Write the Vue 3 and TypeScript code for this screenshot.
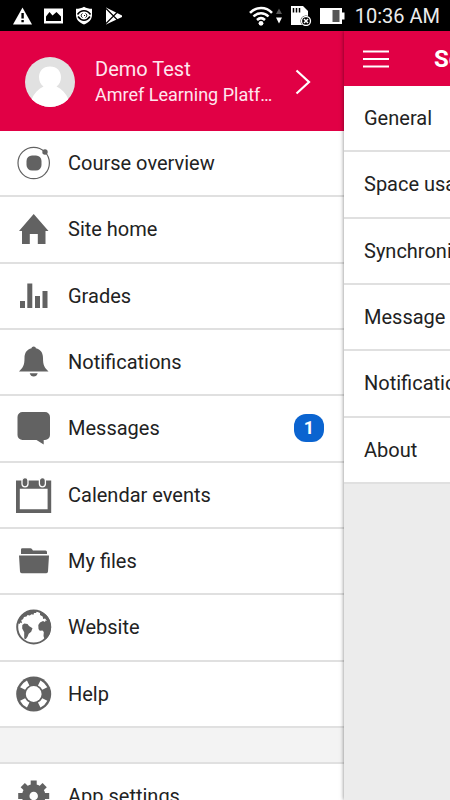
<script setup lang="ts">
interface MenuItem {
  id: string
  label: string
  badge?: number
}

const siteItems: MenuItem[] = [
  { id: 'overview', label: 'Course overview' },
  { id: 'home', label: 'Site home' },
  { id: 'grades', label: 'Grades' },
  { id: 'bell', label: 'Notifications' },
  { id: 'messages', label: 'Messages', badge: 1 },
  { id: 'calendar', label: 'Calendar events' },
  { id: 'files', label: 'My files' },
  { id: 'website', label: 'Website' },
  { id: 'help', label: 'Help' },
]

const settings: string[] = [
  'General',
  'Space usage',
  'Synchronisation',
  'Message preferences',
  'Notification preferences',
  'About',
]
</script>

<template>
  <div class="screen">
    <div class="status">
      <svg width="19" height="18" viewBox="0 0 19 18">
        <path d="M9.500 0.500 19 17.500H0Z" fill="#fff" />
        <path d="M8.400 6h2.400v5.500H8.400zM8.400 13h2.400v2.200H8.400z" fill="#000" />
      </svg>
      <svg width="19" height="18" viewBox="0 0 19 18">
        <path d="M0 1.500h19v15H0Z" fill="#fff" />
        <path d="M2 14V9.500L5.500 5l3 3.500L12.500 5 17 9.500V14Z" fill="#000" />
      </svg>
      <svg width="18" height="19" viewBox="0 0 18 19">
        <path d="M9 .8C6.500 2.200 4 2.800 1 2.800V9c0 4.500 3 7.500 8 9.500 5-2 8-5 8-9.500V2.800c-3 0-5.500-.6-8-2Z" fill="#fff" />
        <path d="M2.500 8.500C6 3.500 12 3.500 15.500 8.500M3 10.500c3.500 5 8.500 5 12 0" fill="none" stroke="#000" stroke-width="1.500" />
        <path d="M7.500 7.500a2.200 2.200 0 0 0 0 4M10.500 7.500a2.200 2.200 0 0 1 0 4M9 9.500h1" fill="none" stroke="#000" />
      </svg>
      <svg width="18" height="18" viewBox="0 0 18 18">
        <path d="M1 0.500 17 8.500v1.500L1 17.500Z" fill="#fff" />
        <path d="M1 1.500 13.500 14M1 16.500 13.500 4" stroke="#000" stroke-width="1.200" />
      </svg>
      <span class="spacer"></span>
      <svg width="24" height="20" viewBox="0 0 24 20" fill="none" stroke="#fff" stroke-width="2.500">
        <path d="M1 6.800C7 .4 17 .4 23 6.800M4.500 10.500c4.200-4.300 10.800-4.300 15 0M8 14c2.500-2.400 5.500-2.400 8 0" />
        <circle cx="12" cy="17.300" r="2.400" fill="#fff" stroke="none" />
      </svg>
      <svg class="traffic" width="8" height="18" viewBox="0 0 8 18">
        <path d="M1 7 4 1.500 7 7Z" fill="#555" />
        <path d="M1 10.500h6L4 16.500Z" fill="#fff" />
      </svg>
      <svg class="card" width="21" height="20" viewBox="0 0 21 20">
        <path d="M0 0h12l5 5v14H0Z" fill="#fff" />
        <path d="M2.500 2v4.500M5.500 2v4.500M8.500 2v4.500" stroke="#000" stroke-width="1.500" />
        <circle cx="15" cy="15" r="5.500" fill="#000" />
        <circle cx="15" cy="15" r="4.500" fill="#000" stroke="#fff" stroke-width="1.300" />
        <path d="m13 13 4 4m0-4-4 4" stroke="#fff" stroke-width="1.500" />
      </svg>
      <svg class="battery" width="25" height="18" viewBox="0 0 25 18">
        <path d="M0 1h22v4.500h2.500v7H22V17H0Z" fill="#fff" />
        <path d="M12.500 3h7v12h-7z" fill="#555" />
      </svg>
      <span class="clock">10:36 AM</span>
    </div>

    <div class="panes">
      <nav class="drawer" aria-label="Main menu">
        <button class="account" type="button">
          <svg class="avatar" width="50" height="50" viewBox="0 0 50 50">
            <defs>
              <clipPath id="avatar-clip"><circle cx="25" cy="25" r="25" /></clipPath>
            </defs>
            <g clip-path="url(#avatar-clip)">
              <path d="M0 0h50v50H0z" fill="#e1e1e1" />
              <path d="M25 9.500c7 0 11 4.800 11 10.500 0 4-1.500 7.500-4.500 9.500 5.500 2.500 9.500 7 12 13V50H6.500v-7.500c2.500-6 6.500-10.500 12-13-3-2-4.500-5.500-4.500-9.500 0-5.700 4-10.500 11-10.500Z" fill="#fff" />
            </g>
          </svg>
          <span class="who">
            <span class="name">Demo Test</span>
            <span class="site">Amref Learning Platform</span>
          </span>
          <svg class="chevron" width="16" height="26" viewBox="0 0 16 26">
            <path d="M1.500 1.500 14 13 1.500 24.500" fill="none" stroke="#fff" stroke-width="2.200" />
          </svg>
        </button>

        <ul class="rows site-rows">
          <li v-for="item in siteItems" :key="item.id">
            <a class="row" href="#">
              <svg class="icon" viewBox="0 0 36 36">
                <g v-if="item.id === 'overview'">
                  <circle cx="17.700" cy="18" r="15.700" fill="none" stroke="#626262" stroke-width="1.200" />
                  <rect x="10.500" y="10.500" width="15" height="15" rx="5.500" />
                  <circle cx="29" cy="7" r="2.700" />
                </g>
                <path v-else-if="item.id === 'home'" d="M17.700 3 32.500 20H29.500V33H21.800V23H13.800V33H6V20H3Z" />
                <path v-else-if="item.id === 'grades'" d="M4 23h5v7H4zM11.300 5.500h5V30h-5zM19 18h5v12h-5zM26.500 13h5v17h-5z" />
                <path v-else-if="item.id === 'bell'" d="M17.700 2.500c1.200 0 2 .8 2.200 1.800 4.600 1 7.100 4.500 7.100 9.700 0 7.500 1.500 9.500 5.500 13.500H3c4-4 5.500-6 5.500-13.500 0-5.200 2.500-8.700 7-9.700.2-1 1-1.800 2.200-1.800ZM13.700 29.200h8c-.5 2-2 3.300-4 3.300s-3.500-1.300-4-3.300Z" />
                <path v-else-if="item.id === 'messages'" d="M6.500 2h22.500a5 5 0 0 1 5 5v18a5 5 0 0 1-5 5h-1.300v4.500L20.500 30h-14a5 5 0 0 1-5-5V7a5 5 0 0 1 5-5Z" />
                <g v-else-if="item.id === 'calendar'">
                  <path fill-rule="evenodd" d="M0 3.500h35.200V36H0ZM3.800 11.700V32.200h27.800V11.700Z" />
                  <g stroke="#fff" stroke-width="1.300">
                    <rect x="6" y=".6" width="6" height="9.200" rx="3" />
                    <rect x="23.400" y=".6" width="6" height="9.200" rx="3" />
                  </g>
                </g>
                <path v-else-if="item.id === 'files'" d="M5 11V6.500q0-1.300 1.300-1.300h8q1.200 0 1.800 1l.8 1.300H29.500q1.500 0 1.500 1.500v2ZM3 12.500h30l-1 16q-.1 1.700-1.700 1.700H5.700q-1.600 0-1.700-1.700Z" />
                <g v-else-if="item.id === 'website'">
                  <circle cx="17.700" cy="18" r="16.500" fill="#fff" stroke="#626262" stroke-width="2" />
                  <path d="M1.500 14C3.500 7 8 3.500 14 1.500l3-.3 4 1-1 1.800-2 0-.5 1.800-2-.6-1.700 1.200-2.300-.4-1 1.500-2.500.5-1 2.300-1.700.7.7 3.200-1.500-.7-1 1.500ZM23 2c5 1.500 9.500 5 11 10l-2.500.5-2.500-3-1.800.5-.5-2.500-2.700-1.500 0-2Z" />
                  <path d="m6.300 16 2-1.500 3.200.5 1.500 2 3.500 2.300-1.300 3.500-2.500 2-1.200 3-1.800 2.500-1.500-.8 0-6.300-2-3.800ZM24 13.500l3-1.500 2 1 .5-1.500 4.500.5 1.200 6-1.200 6.500-3.500 5-2 .5-1-3 .3-4-1.300-1.500-2.700.3-1.300-1.800-.2-4Z" />
                </g>
                <g v-else>
                  <circle cx="17.700" cy="18" r="17.500" />
                  <circle cx="17.700" cy="18" r="12.400" fill="none" stroke="#fff" stroke-width="5.600" pathLength="360" stroke-dasharray="37 53" stroke-dashoffset="-26.500" />
                  <circle cx="17.700" cy="18" r="7.900" fill="#fff" />
                </g>
              </svg>
              <span class="label">{{ item.label }}</span>
              <span v-if="item.badge" class="badge">{{ item.badge }}</span>
            </a>
          </li>
        </ul>

        <div class="group-gap"></div>

        <ul class="rows">
          <li>
            <a class="row" href="#">
              <svg class="icon" viewBox="0 0 36 36">
                <g transform="translate(17.700 18)">
                  <rect v-for="n in 8" :key="n" x="-3" y="-15.500" width="6" height="8" :transform="`rotate(${n * 45})`" />
                  <circle r="8" fill="none" stroke="#626262" stroke-width="7.500" />
                </g>
              </svg>
              <span class="label">App settings</span>
            </a>
          </li>
        </ul>
      </nav>

      <main class="content">
        <header class="toolbar">
          <button class="menu-button" type="button" aria-label="Toggle menu">
            <svg width="26" height="20" viewBox="0 0 26 20">
              <path d="M0 2.500h26M0 10h26M0 17.500h26" stroke="#fff" stroke-width="2.200" />
            </svg>
          </button>
          <h1>Settings</h1>
        </header>
        <ul class="rows setting-rows">
          <li v-for="name in settings" :key="name">
            <a class="row" href="#">{{ name }}</a>
          </li>
        </ul>
      </main>
    </div>
  </div>
</template>

<style>
body {
  margin: 0;
  background: #ececec;
}
</style>

<style scoped>
.screen {
  display: flex;
  flex-direction: column;
  height: 100vh;
  overflow: hidden;
  font-family: Roboto, "Liberation Sans", sans-serif;
  font-size: 20px;
  color: #222;
}

.screen * {
  box-sizing: border-box;
}

svg {
  display: block;
  flex: none;
}

button {
  border: 0;
  padding: 0;
  background: none;
  font: inherit;
  color: inherit;
  text-align: left;
}

.status {
  flex: none;
  display: flex;
  align-items: center;
  gap: 12px;
  height: 31px;
  padding: 0 10px 0 13px;
  background: #000;
  color: #ececec;
}

.spacer {
  flex: 1;
}

.traffic {
  margin-left: -10px;
}

.card {
  margin-left: -4px;
}

.battery {
  margin-left: -4px;
}

.clock {
  margin-left: -2px;
  white-space: nowrap;
}

.panes {
  flex: 1;
  min-height: 0;
  display: flex;
  overflow: hidden;
}

.drawer {
  flex: 0 0 344px;
  min-width: 0;
  background: #fff;
}

.account {
  display: flex;
  align-items: center;
  width: 100%;
  height: 100px;
  padding: 2px 33px 0 25px;
  background: #e10045;
  color: #ffe6ee;
}

.who {
  flex: 1;
  min-width: 0;
  display: flex;
  flex-direction: column;
  margin: 0 20px;
  line-height: 26px;
}

.site {
  overflow: hidden;
  white-space: nowrap;
  text-overflow: ellipsis;
  font-size: 18px;
}

.rows {
  display: grid;
  grid-template-columns: minmax(0, 1fr);
  grid-auto-rows: 1fr;
  margin: 0;
  padding: 0;
  list-style: none;
}

.site-rows {
  min-height: 597px;
}

.setting-rows {
  min-height: 398px;
  background: #fff;
}

.row {
  display: flex;
  align-items: center;
  gap: 16px;
  height: 100%;
  min-height: 66px;
  padding: 0 20px 0 16px;
  border-bottom: 2px solid #e0e0e0;
  color: inherit;
  text-decoration: none;
  white-space: nowrap;
}

.setting-rows .row {
  padding-left: 20px;
}

.icon {
  width: 36px;
  height: 36px;
  fill: #626262;
}

.label {
  flex: 1;
}

.badge {
  min-width: 30px;
  border-radius: 12px;
  background: #0b64d0;
  color: #fff;
  font-size: 18px;
  font-weight: 700;
  line-height: 28px;
  text-align: center;
}

.group-gap {
  height: 36px;
  background: #f3f3f3;
  border-bottom: 2px solid #e0e0e0;
}

.content {
  flex: 0 0 100%;
  background: #ececec;
  box-shadow: 0 0 4px rgba(0, 0, 0, 0.5);
}

.toolbar {
  display: flex;
  align-items: center;
  gap: 45px;
  height: 55px;
  padding-left: 19px;
  background: #e10045;
  color: #fff;
}

h1 {
  margin: 0;
  font-size: 24px;
  font-weight: 700;
}
</style>
